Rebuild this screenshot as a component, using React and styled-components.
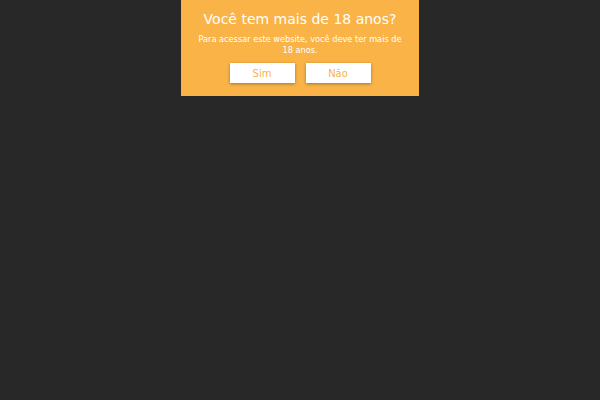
import React from "react";
import styled, { createGlobalStyle } from "styled-components";

const GlobalStyle = createGlobalStyle`
    html, body {
        margin: 0;
        padding: 0;
        background-color: #282828;
        font-family: "DejaVu Sans", sans-serif;
    }
`;

const Page = styled.div`
    width: 600px;
    height: 400px;
    background-color: #282828;
    display: flex;
    justify-content: center;
    align-items: flex-start;
`;

const Modal = styled.div`
    width: 238px;
    height: 96px;
    box-sizing: border-box;
    background-color: #f9b347;
    padding: 10px 16px 0;
    display: flex;
    flex-direction: column;
    align-items: center;
    color: #ffffff;
    text-align: center;
`;

const Title = styled.h1`
    margin: 0;
    font-size: 14px;
    font-weight: normal;
    line-height: 18px;
    white-space: nowrap;
`;

const Text = styled.p`
    margin: 6px 0 0;
    font-size: 8.2px;
    line-height: 10.5px;
`;

const Actions = styled.div`
    display: flex;
    gap: 11px;
    margin-top: 8px;
`;

const Button = styled.button`
    width: 65px;
    height: 20px;
    border: none;
    background-color: #ffffff;
    color: #f9b347;
    font-family: "DejaVu Sans", sans-serif;
    font-size: 10px;
    padding: 0;
    box-shadow: 0 1px 3px rgba(0, 0, 0, 0.35);
    cursor: pointer;
`;

const App = () => {
    return (
        <React.Fragment>
            <GlobalStyle />
            <Page>
                <Modal>
                    <Title>Você tem mais de 18 anos?</Title>
                    <Text>Para acessar este website, você deve ter mais de 18 anos.</Text>
                    <Actions>
                        <Button>Sim</Button>
                        <Button>Não</Button>
                    </Actions>
                </Modal>
            </Page>
        </React.Fragment>
    );
};

export default App;
